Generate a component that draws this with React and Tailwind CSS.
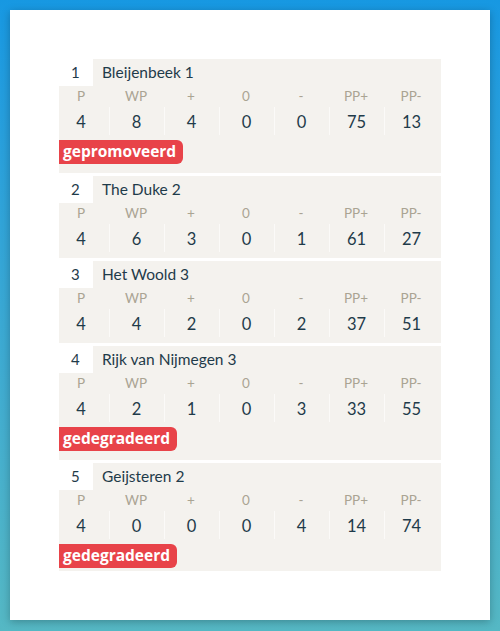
import React from "react";

const teams = [
  { rank: 1, name: "Bleijenbeek 1", v: [4, 8, 4, 0, 0, 75, 13], badge: "gepromoveerd" },
  { rank: 2, name: "The Duke 2", v: [4, 6, 3, 0, 1, 61, 27] },
  { rank: 3, name: "Het Woold 3", v: [4, 4, 2, 0, 2, 37, 51] },
  { rank: 4, name: "Rijk van Nijmegen 3", v: [4, 2, 1, 0, 3, 33, 55], badge: "gedegradeerd" },
  { rank: 5, name: "Geijsteren 2", v: [4, 0, 0, 0, 4, 14, 74], badge: "gedegradeerd", last: true },
];

const heads = ["P", "WP", "+", "0", "-", "PP+", "PP-"];

function Block({ t }) {
  return (
    <div className={"bg-[#f4f2ee] " + (t.last ? "pb-[3px]" : "pb-[9px]")}>
      <div className="flex h-[27px] items-center">
        <div className="flex h-full w-[34px] items-center bg-white pl-[12px] text-[15px] text-[#1f3b4a]">
          {t.rank}
        </div>
        <div className="pl-[9px] text-[15.5px] text-[#1f3b4a]">{t.name}</div>
      </div>
      <div className="ml-[-5.5px] w-[385px]">
        <div className="grid h-[21px] grid-cols-7 items-center text-[13.5px] text-[#aaa493]">
          {heads.map((h) => (
            <div key={h} className="text-center">{h}</div>
          ))}
        </div>
        <div className="grid h-[25px] grid-cols-7 items-stretch text-[16.5px] text-[#1f3b4a]">
          {t.v.map((n, i) => (
            <div
              key={i}
              className={"flex h-full items-center justify-center pt-[3px] " + (i > 0 ? "border-l border-[#fbfaf8]" : "")}
            >
              {n}
            </div>
          ))}
        </div>
      </div>
      {t.badge && (
        <div
          className="mt-[8px] flex h-[24px] w-fit items-center rounded-r-md bg-[#e84349] pl-[4px] pr-[7px] text-[15.5px] font-bold text-white"
          style={{ fontFamily: "'Open Sans', sans-serif" }}
        >
          {t.badge}
        </div>
      )}
    </div>
  );
}

export default function App() {
  return (
    <div
      className="min-h-[631px] w-[500px] bg-gradient-to-b from-[#1798e2] to-[#55b8c4] p-[10px]"
      style={{ fontFamily: "Lato, 'Noto Sans', sans-serif" }}
    >
      <div className="h-[610px] bg-white px-[49px] pt-[49px] shadow-[0_2px_8px_rgba(0,0,0,0.25)]">
        <div className="flex flex-col gap-[3px]">
          {teams.map((t) => (
            <Block key={t.rank} t={t} />
          ))}
        </div>
      </div>
    </div>
  );
}
